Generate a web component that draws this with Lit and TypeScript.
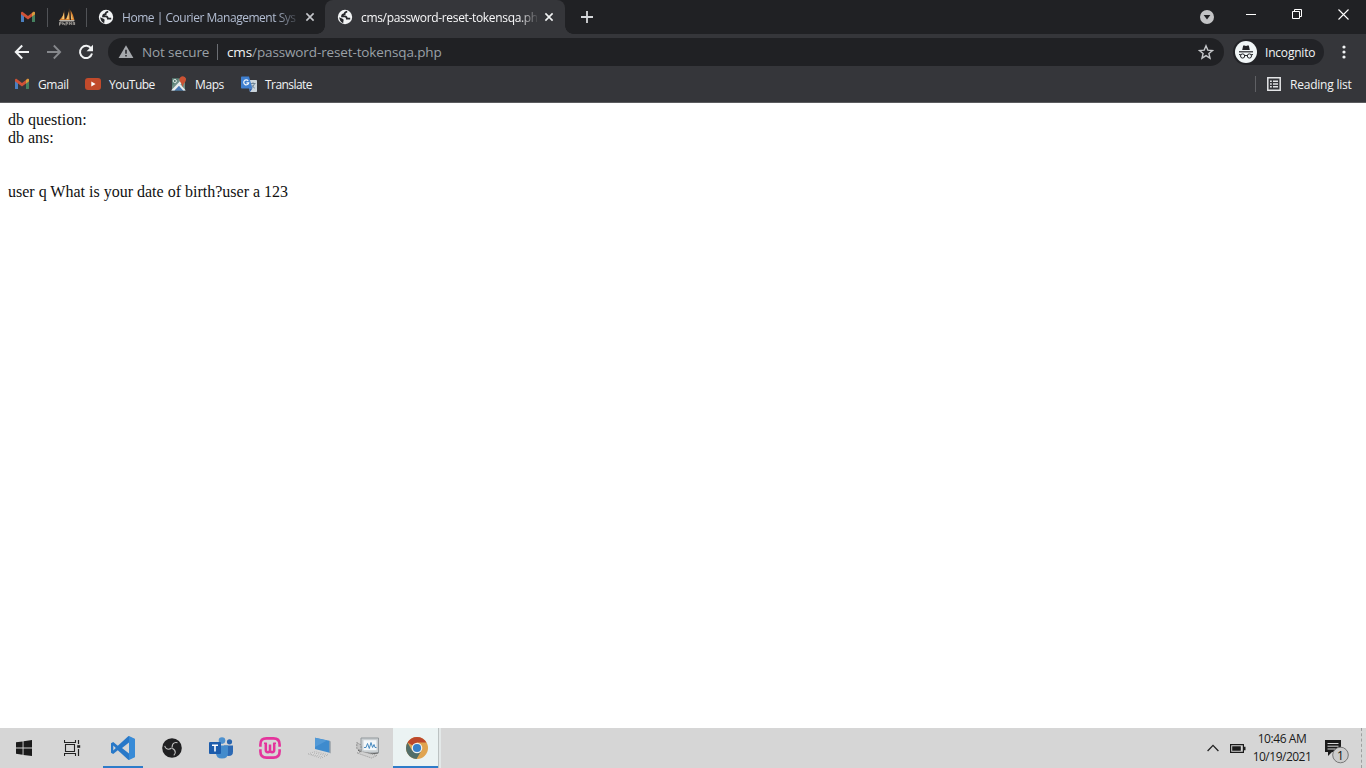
import { LitElement, html, css, svg } from "lit";
import { customElement } from "lit/decorators.js";

const shared = css`
  :host,
  * {
    box-sizing: border-box;
  }

  svg {
    display: block;
    flex: none;
  }

  .cell {
    display: flex;
    align-items: center;
    justify-content: center;
    flex: none;
  }
`;

const gmail = html`
  <svg width="14" height="12" viewBox="0 0 14 12">
    <path d="M0 2v8.5Q0 11 .6 11H3V4z" fill="#4a7fc0" />
    <path d="M14 2v8.5q0 .5-.6.5H11V4z" fill="#45815f" />
    <path d="M0 2.2Q0 .6 1.4.8L7 5l5.6-4.2Q14 .6 14 2.2v1L7 8.4 0 3.2z" fill="#cf5236" />
    <path d="M11 2l1.6-1.2Q14 .6 14 2.2v1L11 5.4z" fill="#d79e3d" />
  </svg>
`;

const globe = html`
  <svg width="16" height="16" viewBox="0 0 16 16">
    <circle cx="8" cy="8" r="7.2" fill="#f1f3f4" />
    <path
      d="M10.2 2.6Q7.4 3 7.6 5.2 5 5.4 5 7.4h3q1.8.2 1.8 2.2h3.4"
      fill="none"
      stroke="#26272b"
      stroke-width="1.7"
    />
    <path d="M2.2 8.2 5.6 9.8q1.8 1 .8 2.4l-.2 2Q2.6 12.8 2.2 8.2z" fill="#26272b" />
  </svg>
`;

const boat = html`
  <svg width="18" height="18" viewBox="0 0 18 18">
    <path d="M6 1.5Q6.5 7 1.5 12H6.8zM11 0q.5 7-4.2 12h5zM12.5 2q2.8 4.5 3.9 10h-3.4z" fill="#d9822e" />
    <path d="M6 4.5 4 11H6zM10.6 3.5 8.8 11h1.9zM13 5.5l.3 5.5h1.4z" fill="#f2cc7c" />
    <path d="M.8 12.1h16l-1.2 1.3H2z" fill="#b9b4ab" />
    <path
      d="M1.5 17.5v-3.2h1.6v1.6H1.6M4.8 14v3M4.8 15.6h1.6v1.6M8 17.5v-3.2h1.6v1.6H8M11.3 17v-2.7l1 1.4 1-1.4V17M15.2 17v-2.7h1.4V17"
      fill="none"
      stroke="#9b9893"
    />
  </svg>
`;

const cross = (color: string) => html`
  <svg width="10" height="10" viewBox="0 0 10 10">
    <path d="M1.4 1.4l7.2 7.2M8.6 1.4 1.4 8.6" stroke=${color} stroke-width="1.6" />
  </svg>
`;

@customElement("tab-strip")
export class TabStrip extends LitElement {
  static styles = [
    shared,
    css`
      :host {
        display: flex;
        height: 34px;
        background: #202124;
        font: 12px "Open Sans", sans-serif;
      }

      .pinned {
        width: 38px;
        height: 34px;
      }

      .first {
        width: 47px;
        padding-left: 8px;
      }

      .divider {
        width: 1px;
        height: 19px;
        margin-top: 8px;
        background: #515357;
        flex: none;
      }

      .tab {
        display: flex;
        align-items: center;
        height: 34px;
        flex: none;
      }

      .inactive {
        width: 238px;
        padding-left: 11px;
      }

      .active {
        position: relative;
        width: 240px;
        padding-left: 12px;
        background: #35363a;
        border-radius: 8px 8px 0 0;
      }

      .active::before,
      .active::after {
        content: "";
        position: absolute;
        bottom: 0;
        width: 8px;
        height: 8px;
      }

      .active::before {
        left: -8px;
        background: radial-gradient(circle at 0 0, #202124 7.5px, #35363a 8px);
      }

      .active::after {
        right: -8px;
        background: radial-gradient(circle at 100% 0, #202124 7.5px, #35363a 8px);
      }

      .title {
        width: 176px;
        margin: 0 7px 0 8px;
        white-space: nowrap;
        color: #b3bed3;
        letter-spacing: -0.47px;
        mask-image: linear-gradient(90deg, #000 152px, transparent 180px);
      }

      .active .title {
        color: #f8f8f9;
        letter-spacing: -0.33px;
        mask-image: linear-gradient(90deg, #000 158px, transparent 178px);
      }

      .new-tab {
        width: 44px;
      }

      .spacer {
        flex: 1;
      }

      .search-tabs {
        width: 42px;
      }

      .window-button {
        width: 46px;
        height: 28px;
      }
    `,
  ];

  public render() {
    return html`
      <div class="cell pinned first">${gmail}</div>
      <div class="divider"></div>
      <div class="cell pinned">${boat}</div>
      <div class="divider"></div>
      <div class="tab inactive">
        ${globe}
        <span class="title">Home | Courier Management Sys</span>
        ${cross("#c4c6ca")}
      </div>
      <div class="tab active">
        ${globe}
        <span class="title">cms/password-reset-tokensqa.ph</span>
        ${cross("#f1f3f4")}
      </div>
      <div class="cell new-tab">
        <svg width="12" height="12" viewBox="0 0 12 12">
          <path d="M6 0v12M0 6h12" stroke="#d5d7da" stroke-width="1.8" />
        </svg>
      </div>
      <div class="spacer"></div>
      <div class="cell search-tabs">
        <svg width="14" height="14" viewBox="0 0 14 14">
          <circle cx="7" cy="7" r="7" fill="#c3c4c6" />
          <path d="M3.6 5h6.8L7 9.4z" fill="#202124" />
        </svg>
      </div>
      <div class="cell window-button">
        <svg width="10" height="10" viewBox="0 0 10 10"><path d="M0 5.5h10" stroke="#fff" /></svg>
      </div>
      <div class="cell window-button">
        <svg width="10" height="10" viewBox="0 0 10 10">
          <path d="M.5 2.5h7v7h-7zM2.5 2.5v-2h7v7h-2" fill="none" stroke="#fff" />
        </svg>
      </div>
      <div class="cell window-button">
        <svg width="11" height="11" viewBox="0 0 11 11">
          <path d="M.5.5l10 10M10.5.5l-10 10" stroke="#fff" stroke-width="1.1" />
        </svg>
      </div>
    `;
  }
}

@customElement("address-bar")
export class AddressBar extends LitElement {
  static styles = [
    shared,
    css`
      :host {
        display: flex;
        align-items: center;
        height: 36px;
        padding-left: 6px;
        background: #35363a;
        font: 13.5px "Open Sans", sans-serif;
      }

      .nav {
        width: 32px;
      }

      .omnibox {
        display: flex;
        align-items: center;
        width: 1116px;
        height: 28px;
        margin-left: 6px;
        padding: 0 10px;
        border-radius: 14px;
        background: #202124;
        color: #9aa0a6;
        white-space: nowrap;
        letter-spacing: -0.12px;
      }

      .security {
        width: 67px;
        margin-left: 8px;
      }

      .divider {
        width: 1px;
        height: 16px;
        margin: 0 9px 0 8px;
        background: #6b6e73;
      }

      .url {
        flex: 1;
      }

      .host {
        color: #f1f3f4;
      }

      .profile {
        display: flex;
        align-items: center;
        width: 91px;
        height: 26px;
        margin-left: 9px;
        padding-left: 2px;
        border-radius: 13px;
        background: #222327;
        color: #f1f3f4;
        font-size: 12px;
        gap: 8px;
        letter-spacing: -0.2px;
      }

      .menu {
        width: 40px;
      }
    `,
  ];

  public render() {
    return html`
      <div class="cell nav">
        <svg width="16" height="16" viewBox="0 0 16 16">
          <path d="M15 8H2M8.2 1.5 1.8 8l6.4 6.5" fill="none" stroke="#f1f3f4" stroke-width="2" />
        </svg>
      </div>
      <div class="cell nav">
        <svg width="16" height="16" viewBox="0 0 16 16">
          <path d="M1 8h13M7.8 1.5 14.2 8l-6.4 6.5" fill="none" stroke="#86888c" stroke-width="1.8" />
        </svg>
      </div>
      <div class="cell nav">
        <svg width="16" height="16" viewBox="0 0 16 16">
          <path d="M13.2 4.6A6.1 6.1 0 1 0 14 9.5" fill="none" stroke="#f1f3f4" stroke-width="2" />
          <path d="M15 .8v6.4H8.6z" fill="#f1f3f4" />
        </svg>
      </div>
      <div class="omnibox">
        <svg width="16" height="16" viewBox="0 0 16 16">
          <path d="M8 1.2 15.4 14H.6z" fill="#a5a8ac" />
          <path d="M8 5.8v4M8 11v1.6" stroke="#202124" stroke-width="1.5" />
        </svg>
        <span class="security">Not secure</span>
        <span class="divider"></span>
        <span class="url"><span class="host">cms</span>/password-reset-tokensqa.php</span>
        <svg width="16" height="16" viewBox="0 0 16 16">
          <path
            d="M8 1.8l1.8 4.3 4.7.4-3.6 3 1.1 4.7L8 11.7l-4 2.5 1.1-4.7-3.6-3 4.7-.4z"
            fill="none"
            stroke="#c6c8cb"
            stroke-width="1.4"
          />
        </svg>
      </div>
      <div class="profile">
        <svg width="22" height="22" viewBox="0 0 22 22">
          <circle cx="11" cy="11" r="11" fill="#f1f6f7" />
          <path d="M7.2 9l1-4.4h1.3l1.5.5 1.5-.5h1.3l1 4.4z" fill="#222327" />
          <path d="M4 10.8h14" stroke="#222327" stroke-width="1.2" />
          <circle cx="7.6" cy="15" r="2.1" fill="none" stroke="#222327" />
          <circle cx="14.4" cy="15" r="2.1" fill="none" stroke="#222327" />
          <path d="M4 13.6h1.8M9.7 14.8q1.3-.9 2.6 0M16.2 13.6H18" fill="none" stroke="#222327" />
        </svg>
        <span>Incognito</span>
      </div>
      <div class="cell menu">
        <svg width="4" height="14" viewBox="0 0 4 14" fill="#f1f3f4">
          <circle cx="2" cy="2" r="1.6" />
          <circle cx="2" cy="7" r="1.6" />
          <circle cx="2" cy="12" r="1.6" />
        </svg>
      </div>
    `;
  }
}

@customElement("bookmarks-bar")
export class BookmarksBar extends LitElement {
  static styles = [
    shared,
    css`
      :host {
        display: flex;
        align-items: center;
        height: 33px;
        padding: 0 0 4px 14px;
        background: #35363a;
        border-bottom: 1px solid #5b5c5f;
        color: #f1f3f4;
        font: 12px "Open Sans", sans-serif;
        white-space: nowrap;
      }

      .bookmark {
        display: flex;
        align-items: center;
        gap: 8px;
        flex: none;
      }

      .icon {
        width: 16px;
      }

      .gmail {
        width: 71px;
        letter-spacing: -0.4px;
      }

      .youtube {
        width: 86px;
        letter-spacing: -0.5px;
      }

      .maps {
        width: 70px;
        letter-spacing: -0.4px;
      }

      .translate {
        letter-spacing: -0.55px;
      }

      .spacer {
        flex: 1;
      }

      .reading-list {
        height: 16px;
        width: 111px;
        padding-left: 11px;
        border-left: 1px solid #5f6064;
        gap: 9px;
        letter-spacing: -0.22px;
      }
    `,
  ];

  public render() {
    return html`
      <div class="bookmark gmail"><span class="cell icon">${gmail}</span><span>Gmail</span></div>
      <div class="bookmark youtube">
        <svg width="16" height="12" viewBox="0 0 16 12">
          <rect width="16" height="12" rx="3" fill="#c14a2b" />
          <path d="M6.3 3.4 10.6 6 6.3 8.6z" fill="#fff" />
        </svg>
        <span>YouTube</span>
      </div>
      <div class="bookmark maps">
        <svg width="16" height="16" viewBox="0 0 16 16">
          <path d="M1 2.5h13v12H1z" fill="#6f8f86" />
          <path d="M1 2.5h7L1 10z" fill="#537b70" />
          <path d="M1 14.5 7.5 7l6.5 7.5z" fill="#4778b5" />
          <path d="M0 14.5 13 1l1.5 2-11 11.5zM7 8.8l1.8-1.4 6 7h-2.6z" fill="#e9ecec" />
          <circle cx="3.8" cy="5" r="1.6" fill="none" stroke="#dfe5e4" />
          <path d="M11.6 11Q11.4 8 9.4 6.2 7.4 3 9.4 1.2q2.2-2 4.6 0 2 2 0 5Q12 8 11.6 11z" fill="#cb5233" />
        </svg>
        <span>Maps</span>
      </div>
      <div class="bookmark translate">
        <svg width="16" height="16" viewBox="0 0 16 16">
          <path d="M6 4h9.2q.8 0 .8.8v10.4q0 .8-.8.8H9z" fill="#cbd5dc" />
          <path d="M9.5 7.5h5M12 6.3v1.2M13.5 7.6q-.8 3-3.4 4.6M10.6 8.8q1 2 3.2 3.4" fill="none" stroke="#6d8497" />
          <path d="M.8.6H8L11.4 12.6H.8Q0 12.6 0 11.8V1.4Q0 .6.8.6z" fill="#3f7fcf" />
          <path d="M7.2 4.8a2.5 2.5 0 1 0 .5 2H5.4" fill="none" stroke="#f3f8fb" stroke-width="1.2" />
          <path d="M8 12.6h3.4L9 16z" fill="#2d5ea8" />
        </svg>
        <span>Translate</span>
      </div>
      <div class="spacer"></div>
      <div class="bookmark reading-list">
        <svg width="14" height="14" viewBox="0 0 14 14">
          <path d="M.8.8h12.4v12.4H.8z" fill="none" stroke="#e4e5e7" stroke-width="1.5" />
          <path d="M3 4.2h1.8M3 7h1.8M3 9.8h1.8M6 4.2h5M6 7h5M6 9.8h5" stroke="#e4e5e7" stroke-width="1.4" />
        </svg>
        <span>Reading list</span>
      </div>
    `;
  }
}

@customElement("task-bar")
export class TaskBar extends LitElement {
  static styles = [
    shared,
    css`
      :host {
        display: flex;
        height: 40px;
        background: #d6d6d6;
        color: #1a1a1a;
        font: 12px "Open Sans", sans-serif;
      }

      .app {
        width: 49px;
        height: 40px;
      }

      .start {
        width: 48px;
      }

      .underlined {
        width: 40px;
        margin: 0 4px 0 7px;
        border-bottom: 2px solid #2e7cc9;
        padding-top: 2px;
      }

      .current {
        width: 45px;
        margin-left: 1px;
        background: #ebf3f3;
        border-bottom: 2px solid #2e7cc9;
        padding: 2px 0 0 2px;
      }

      .stacked {
        width: 3px;
        border-left: 1px solid #bcc2c2;
        background: #e3e8e8;
      }

      .spacer {
        flex: 1;
      }

      .chevron {
        width: 24px;
      }

      .battery {
        width: 26px;
      }

      .clock {
        display: flex;
        flex-direction: column;
        align-items: center;
        width: 62px;
        padding-top: 2px;
        line-height: 18px;
        white-space: nowrap;
        letter-spacing: -0.42px;
      }

      .date {
        letter-spacing: -0.5px;
      }

      .notifications {
        width: 48px;
      }

      .show-desktop {
        width: 5px;
        border-left: 1px dashed #9f9f9f;
      }
    `,
  ];

  // Three aperture blades, each turned a third of a circle
  private blades() {
    return [20, 140, 260].map(
      (angle) => svg`
        <path
          transform="rotate(${angle} 10 10)"
          d="M10 9.6Q8.6 6.4 10.4 4.4q1-1 3-1.2"
          fill="none"
          stroke="#bdbdbd"
          stroke-width="1.1"
        />
      `,
    );
  }

  public render() {
    return html`
      <div class="cell app start">
        <svg width="16" height="16" viewBox="0 0 16 16" fill="#1b1b1b">
          <path d="M0 2.3 6.6 1.4V7.6H0zM7.5 1.2 16 0V7.6H7.5zM0 8.5H6.6V14.7L0 13.8zM7.5 8.5H16V16L7.5 14.9z" />
        </svg>
      </div>
      <div class="cell app start">
        <svg width="17" height="16" viewBox="0 0 17 16" fill="none" stroke="#222">
          <path d="M.5 0v2.5h11V0M.5 16v-2.5h11V16M1.5 4.5h9v7h-9z" stroke-width="1.1" />
          <path d="M14.5 0v4M14.5 9v7" stroke-width="1.2" />
          <path d="M13.2 5.2h3v2.6h-3z" fill="#222" stroke="none" />
        </svg>
      </div>
      <div class="cell app underlined">
        <svg width="24" height="24" viewBox="0 0 24 24">
          <path
            d="M17.5 0 24 3v18l-6.5 3L6.8 14.3 2.2 18 0 16.8V7.2L2.2 6l4.6 3.7zM18 6.6 11 12l7 5.4zM2.3 9.4v5.2L4.8 12z"
            fill="#2878c8"
            fill-rule="evenodd"
          />
          <path d="M18 0 24 3v18l-6 3z" fill="#3e92dc" fill-opacity=".75" />
        </svg>
      </div>
      <div class="cell app">
        <svg width="20" height="20" viewBox="0 0 20 20">
          <circle cx="10" cy="10" r="9.8" fill="#202022" />
          ${this.blades()}
        </svg>
      </div>
      <div class="cell app">
        <svg width="24" height="22" viewBox="0 0 24 22">
          <circle cx="13" cy="3.6" r="3.3" fill="#4d91cf" />
          <circle cx="20.5" cy="4.8" r="2.6" fill="#2a65ad" />
          <path d="M15 8.5h9v6.2q0 4.3-4.5 4.3Q17 19 15 17z" fill="#2c69b4" />
          <path d="M7 8.5h12v7.5q0 5.6-6 5.6t-6-5.6z" fill="#438bcc" />
          <rect y="5" width="12" height="12" rx="1" fill="#1c5cac" />
          <path d="M3 8.2h6M6 8v6.6" stroke="#fff" stroke-width="1.6" />
        </svg>
      </div>
      <div class="cell app">
        <svg width="22" height="22" viewBox="0 0 22 22" fill="none" stroke="#e4349c">
          <path
            d="M1.4 9.8V7.5Q1.4 1.4 7.5 1.4h7q6.1 0 6.1 6.1v2.3M1.4 12.2v2.3q0 6.1 6.1 6.1h7q6.1 0 6.1-6.1v-2.3"
            stroke-width="2.6"
          />
          <path d="M5 6.2h2.8M14.2 6.2H17" stroke-width="1.6" />
          <path
            d="M6.8 6v7q0 2.2 2.1 2.2Q11 15.2 11 13V7.5V13q0 2.2 2.1 2.2 2.1 0 2.1-2.2V6"
            stroke-width="2.5"
          />
        </svg>
      </div>
      <div class="cell app">
        <svg width="24" height="22" viewBox="0 0 24 22">
          <path d="M8 .8 22.6 3.8v12L8 12z" fill="#3e8bce" />
          <path d="M8 .8 20 3.4 8 10z" fill="#5299d6" />
          <path d="M22.6 3.8l.9.6v12l-.9-.6z" fill="#7b8690" />
          <path d="M1 17l7-2.4 13 3.2-7 3.4z" fill="#dadada" stroke="#b0b0b0" stroke-dasharray="1 1.2" />
          <path d="M4 17.3l11 2.4M7 16l11 2.4" stroke="#b0b0b0" stroke-dasharray="1 1" />
        </svg>
      </div>
      <div class="cell app">
        <svg width="24" height="22" viewBox="0 0 24 22">
          <path d="M5 1h17.5v15H5z" fill="#cbd0d3" stroke="#93999d" />
          <path d="M7.5 3.2h13v10h-13z" fill="#f4f8fa" />
          <path d="M8 10.5h2l1.5-4 1.8 5 1.7-6 1.6 5 1.4-3 1 3h1.5" fill="none" stroke="#478ac0" />
          <path d="M.8 5.6 5 8v6L.8 11.5z" fill="#c4c4c4" stroke="#8a8a8a" stroke-dasharray="2 1" />
          <path d="M2 13.2 5.5 15.4 16 16.8l6-.8" fill="none" stroke="#666" />
          <path d="M1 16l5-1.5 15 4-5.5 2.5z" fill="#d1d1d1" stroke="#9c9c9c" stroke-dasharray="1.2 1" />
        </svg>
      </div>
      <div class="cell app current">
        <svg width="24" height="24" viewBox="0 0 24 24">
          <circle cx="12" cy="12" r="11" fill="#e0a450" />
          <path d="M12 12 2.5 6.5A11 11 0 0 1 21.5 6.5H12z" fill="#bd482c" />
          <path d="M2.5 6.5A11 11 0 0 0 11.5 23l5-8.5L12 12 7.2 14.8z" fill="#526e69" />
          <circle cx="12" cy="12" r="5.3" fill="#f2f2f2" />
          <circle cx="12" cy="12" r="4.1" fill="#3881ca" />
        </svg>
      </div>
      <div class="stacked"></div>
      <div class="spacer"></div>
      <div class="cell chevron">
        <svg width="12" height="8" viewBox="0 0 12 8">
          <path d="M.6 7 6 1.4 11.4 7" fill="none" stroke="#222" stroke-width="1.3" />
        </svg>
      </div>
      <div class="cell battery">
        <svg width="16" height="9" viewBox="0 0 16 9">
          <path d="M.6.6h12.8v7.8H.6z" fill="none" stroke="#1b1b1b" stroke-width="1.2" />
          <path d="M2.2 2.2h8.6v4.6H2.2zM14 2.7h1.5v3.6H14z" fill="#1b1b1b" />
        </svg>
      </div>
      <div class="clock">
        <span>10:46 AM</span>
        <span class="date">10/19/2021</span>
      </div>
      <div class="notifications">
        <svg width="48" height="40" viewBox="0 0 48 40">
          <path d="M12 12h16v12h-9l-4 4v-4h-3z" fill="#1b1b1b" />
          <path d="M14.5 15.5h11M14.5 18.2h11M14.5 21h8" stroke="#d6d6d6" />
          <circle cx="27.5" cy="27" r="7.8" fill="#ccc" stroke="#777" />
          <text x="27.5" y="31.5" text-anchor="middle" font-size="12" fill="#111">1</text>
        </svg>
      </div>
      <div class="show-desktop"></div>
    `;
  }
}

@customElement("app-root")
export class AppRoot extends LitElement {
  static styles = css`
    :host {
      display: flex;
      flex-direction: column;
      width: 1366px;
      height: 768px;
      overflow: hidden;
      background: #fff;
    }

    .page {
      flex: 1;
      padding: 8px;
      color: #111;
      font: 16px/18px "Liberation Serif", serif;
    }
  `;

  public render() {
    return html`
      <tab-strip></tab-strip>
      <address-bar></address-bar>
      <bookmarks-bar></bookmarks-bar>
      <main class="page">
        db question:<br />db ans:<br /><br /><br />user q What is your date of birth?user a 123
      </main>
      <task-bar></task-bar>
    `;
  }
}
